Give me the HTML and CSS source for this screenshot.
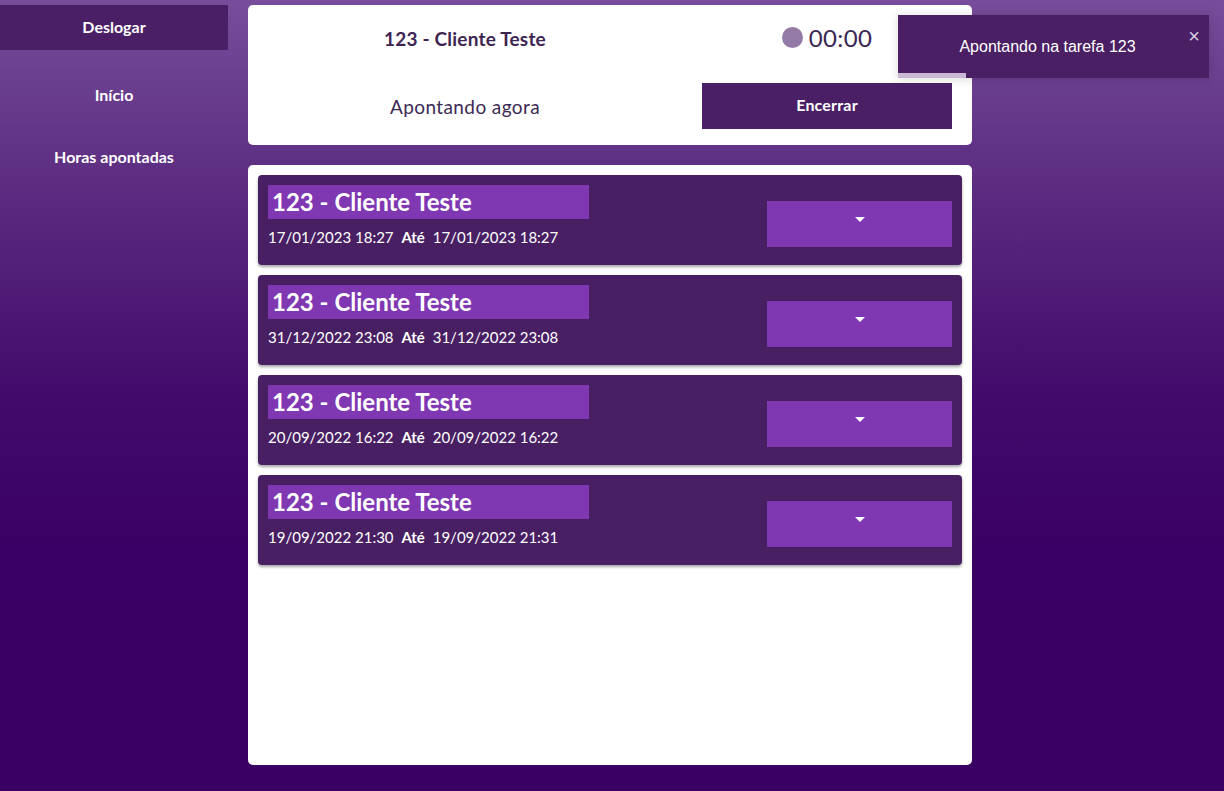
FILE: index.html
```html
<!DOCTYPE html>
<html lang="pt-BR">
<head>
<meta charset="utf-8">
<title>Apontamentos</title>
<link rel="stylesheet" href="styles.css">
</head>
<body>
<div class="app">
  <nav class="sidebar">
    <button class="logout">Deslogar</button>
    <a class="nav-link nav-first">Início</a>
    <a class="nav-link">Horas apontadas</a>
  </nav>
  <main class="content">
    <section class="current card">
      <div class="current-grid">
        <div class="current-title">123 - Cliente Teste</div>
        <div class="timer"><span class="dot"></span><span class="time">00:00</span></div>
        <div class="current-label">Apontando agora</div>
        <button class="btn-end">Encerrar</button>
      </div>
    </section>
    <section class="list card">
      <div class="item">
        <div class="item-info">
          <div class="item-title">123 - Cliente Teste</div>
          <div class="item-dates">17/01/2023 18:27 <b>Até</b> 17/01/2023 18:27</div>
        </div>
        <button class="item-toggle"><span class="caret"></span></button>
      </div>
      <div class="item">
        <div class="item-info">
          <div class="item-title">123 - Cliente Teste</div>
          <div class="item-dates">31/12/2022 23:08 <b>Até</b> 31/12/2022 23:08</div>
        </div>
        <button class="item-toggle"><span class="caret"></span></button>
      </div>
      <div class="item">
        <div class="item-info">
          <div class="item-title">123 - Cliente Teste</div>
          <div class="item-dates">20/09/2022 16:22 <b>Até</b> 20/09/2022 16:22</div>
        </div>
        <button class="item-toggle"><span class="caret"></span></button>
      </div>
      <div class="item">
        <div class="item-info">
          <div class="item-title">123 - Cliente Teste</div>
          <div class="item-dates">19/09/2022 21:30 <b>Até</b> 19/09/2022 21:31</div>
        </div>
        <button class="item-toggle"><span class="caret"></span></button>
      </div>
    </section>
  </main>
</div>
<div class="toast">
  <span class="toast-text">Apontando na tarefa 123</span>
  <span class="toast-close">×</span>
  <span class="toast-progress"></span>
</div>
</body>
</html>
```
FILE: styles.css
```css
* { box-sizing: border-box; }
html, body { height: 100%; }
body {
  margin: 0;
  font-family: Lato, "Noto Sans", sans-serif;
  background: linear-gradient(180deg, #774d9b 0%, #5d2e82 22%, #420b6b 50%, #3b0065 70%, #3a0063 100%);
  min-height: 791px;
  overflow: hidden;
}
.app {
  display: flex;
  gap: 20px;
  padding-top: 5px;
}
.sidebar {
  width: 228px;
  display: flex;
  flex-direction: column;
  align-items: center;
}
.logout {
  width: 228px;
  height: 45px;
  background: #4a1f66;
  border: none;
  color: #fff;
  font-family: inherit;
  font-size: 16px;
  font-weight: 700;
  padding: 0 0 2px 0;
}
.nav-link {
  color: #fff;
  font-size: 16px;
  font-weight: 700;
  line-height: 20px;
}
.nav-first { margin-top: 35px; }
.nav-link + .nav-link { margin-top: 42px; }

.content {
  width: 724px;
  display: flex;
  flex-direction: column;
  gap: 20px;
}
.card {
  background: #fff;
  border-radius: 5px;
}
.current { height: 140px; }
.current-grid {
  display: grid;
  grid-template-columns: 434px 270px;
  grid-template-rows: 66px 66px;
  align-items: start;
}
.current-title {
  text-align: center;
  font-size: 19px;
  font-weight: 700;
  color: #3e2452;
  margin-top: 22px;
  letter-spacing: 0.2px;
}
.timer {
  display: flex;
  align-items: center;
  justify-content: center;
  gap: 6px;
  padding-left: 20px;
  margin-top: 18px;
}
.dot {
  width: 21px;
  height: 21px;
  border-radius: 50%;
  background: #947ba7;
}
.time {
  font-size: 24px;
  color: #3a2654;
  letter-spacing: 0.4px;
}
.current-label {
  text-align: center;
  font-size: 19px;
  color: #3c2a55;
  letter-spacing: 0.4px;
  margin-top: 24px;
}
.btn-end {
  width: 250px;
  height: 46px;
  margin-left: 20px;
  margin-top: 12px;
  background: #4a1f66;
  border: none;
  color: #fff;
  font-family: inherit;
  font-size: 16px;
  font-weight: 700;
  letter-spacing: 0.2px;
  padding: 0 0 4px 0;
}

.list {
  height: 600px;
  padding: 10px;
  display: flex;
  flex-direction: column;
  gap: 10px;
}
.item {
  height: 90px;
  background: #481f63;
  border-radius: 4px;
  box-shadow: 0 2px 3px rgba(0,0,0,0.35);
  display: flex;
  justify-content: space-between;
  padding: 10px 10px 0 10px;
}
.item-info { display: flex; flex-direction: column; }
.item-title {
  width: 321px;
  height: 34px;
  background: #7f38b2;
  color: #fff;
  font-size: 24px;
  font-weight: 700;
  padding-left: 4px;
  line-height: 34px;
}
.item-dates {
  color: #fff;
  font-size: 15px;
  margin-top: 9px;
}
.item-dates b { font-weight: 700; margin: 0 4px; }
.item-toggle {
  width: 185px;
  height: 46px;
  margin-top: 16px;
  background: #7f38b2;
  border: none;
  display: flex;
  align-items: center;
  justify-content: center;
  padding: 0;
}
.caret {
  width: 0;
  height: 0;
  border-left: 5px solid transparent;
  border-right: 5px solid transparent;
  border-top: 5px solid #fff;
  margin-top: -10px;
}

.toast {
  position: absolute;
  left: 898px;
  top: 15px;
  width: 311px;
  height: 63px;
  background: #4a1f64;
  box-shadow: 0 1px 10px rgba(0,0,0,0.15);
  display: flex;
  align-items: center;
  justify-content: center;
  padding: 1px 12px 0 0;
}
.toast-text {
  color: #fff;
  font-family: "Liberation Sans", Arial, sans-serif;
  font-size: 16px;
}
.toast-close {
  position: absolute;
  right: 9px;
  top: 9px;
  color: #d8cfe0;
  font-family: "Liberation Sans", Arial, sans-serif;
  font-size: 20px;
  line-height: 24px;
}
.toast-progress {
  position: absolute;
  left: 0;
  bottom: 0;
  width: 68px;
  height: 5px;
  background: #c8b8d4;
}
```
